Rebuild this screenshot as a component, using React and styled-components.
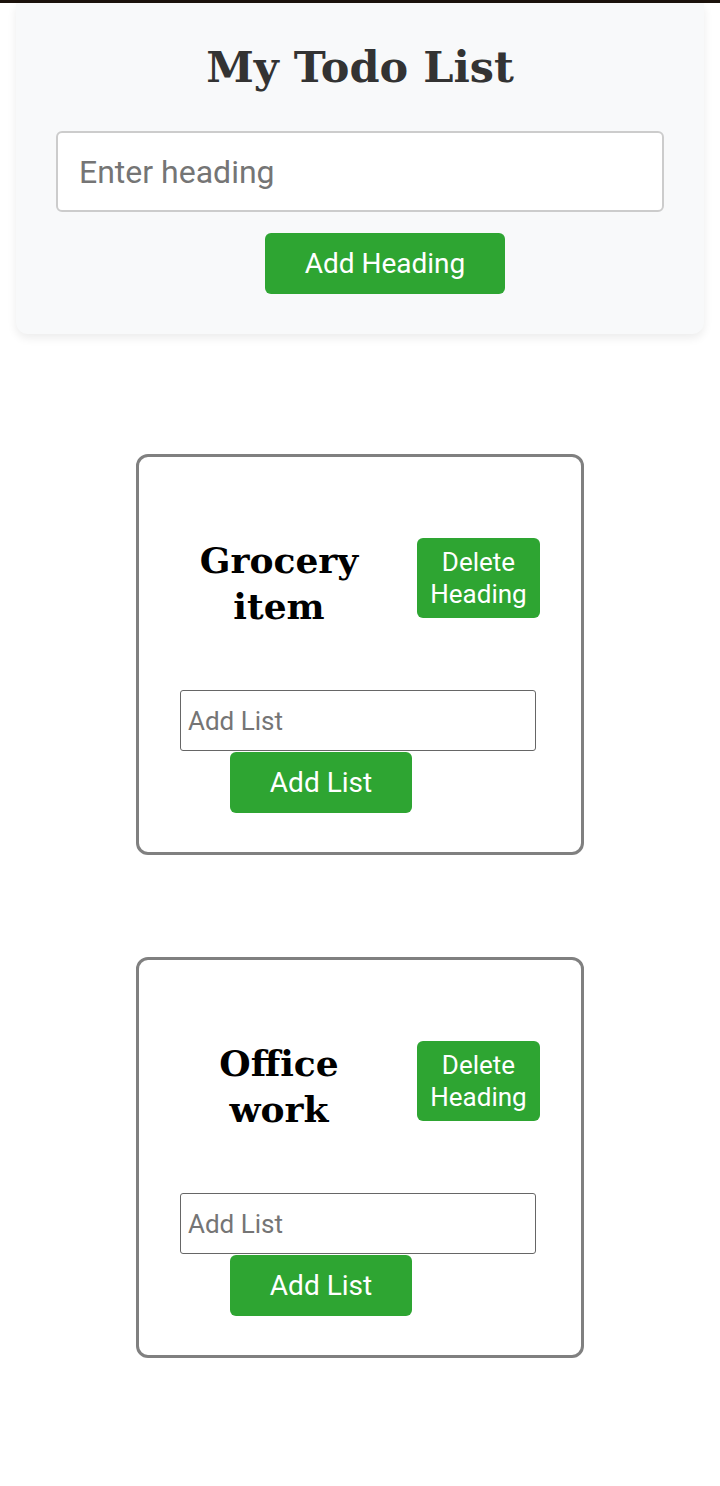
import React from 'react';
import styled, {createGlobalStyle} from 'styled-components';

const GlobalStyle = createGlobalStyle`
body {
  margin: 0;
  background: #fff;
  font-family: Roboto, "Liberation Sans", sans-serif;
}
`;

const TopLine = styled.div`
height: 3px;
background: #1b120c;
`;

const Header = styled.div`
margin: 0 16px;
padding: 40px 40px 40px;
background: #f8f9fa;
border-radius: 0 0 12px 12px;
box-shadow: 0 4px 10px rgba(0, 0, 0, 0.08);
display: flex;
flex-direction: column;
align-items: center;
`;

const Title = styled.h1`
margin: 0 0 40px;
font-family: "DejaVu Serif", serif;
font-weight: bold;
font-size: 43px;
line-height: 48px;
color: #333;
`;

const HeadingInput = styled.input`
box-sizing: border-box;
width: 608px;
height: 81px;
padding: 0 21px;
border: 2px solid #ccc;
border-radius: 6px;
font-family: Roboto, sans-serif;
font-size: 32px;
color: #333;
background: #fff;
&::placeholder { color: #757575; }
`;

const GreenButton = styled.button`
box-sizing: border-box;
width: ${p => p.w}px;
height: ${p => p.h}px;
margin-left: ${p => p.ml || 0}px;
border: none;
border-radius: 6px;
background: #2ea532;
color: #fff;
font-family: Roboto, sans-serif;
font-size: ${p => p.fs || 28}px;
line-height: 32px;
padding: 0;
`;

const HeaderButton = styled(GreenButton)`
margin-top: 21px;
`;

const Cards = styled.div`
display: flex;
flex-direction: column;
align-items: center;
gap: 102px;
padding: 120px 0 120px;
`;

const Card = styled.div`
box-sizing: border-box;
width: 448px;
height: 401px;
border: 3px solid #808080;
border-radius: 12px;
padding: 70px 41px 0;
`;

const CardHead = styled.div`
display: flex;
align-items: center;
justify-content: space-between;
width: 360px;
`;

const CardTitle = styled.h2`
margin: 0;
width: 198px;
text-align: center;
font-family: "DejaVu Serif", serif;
font-weight: bold;
font-size: 36px;
line-height: 46px;
color: #000;
padding-top: 10px;
`;

const ListInput = styled.input`
display: block;
box-sizing: border-box;
margin-top: 61px;
width: 356px;
height: 61px;
padding: 0 7px;
border: 1px solid #666;
border-radius: 3px;
font-family: Roboto, sans-serif;
font-size: 26px;
&::placeholder { color: #757575; }
`;

const ListButton = styled(GreenButton)`
display: block;
margin-top: 1px;
`;

const headings = ['Grocery item', 'Office work'];

const App = () => {
    return (
        <>
            <GlobalStyle />
            <TopLine />
            <Header>
                <Title>My Todo List</Title>
                <HeadingInput placeholder='Enter heading' />
                <HeaderButton w={240} h={61} ml={50}>Add Heading</HeaderButton>
            </Header>
            <Cards>
                {headings.map(h => (
                    <Card key={h}>
                        <CardHead>
                            <CardTitle>{h}</CardTitle>
                            <GreenButton w={123} h={80} fs={26}>Delete<br />Heading</GreenButton>
                        </CardHead>
                        <ListInput placeholder='Add List' />
                        <ListButton w={182} h={61} ml={50}>Add List</ListButton>
                    </Card>
                ))}
            </Cards>
        </>
    );
};

export default App;
